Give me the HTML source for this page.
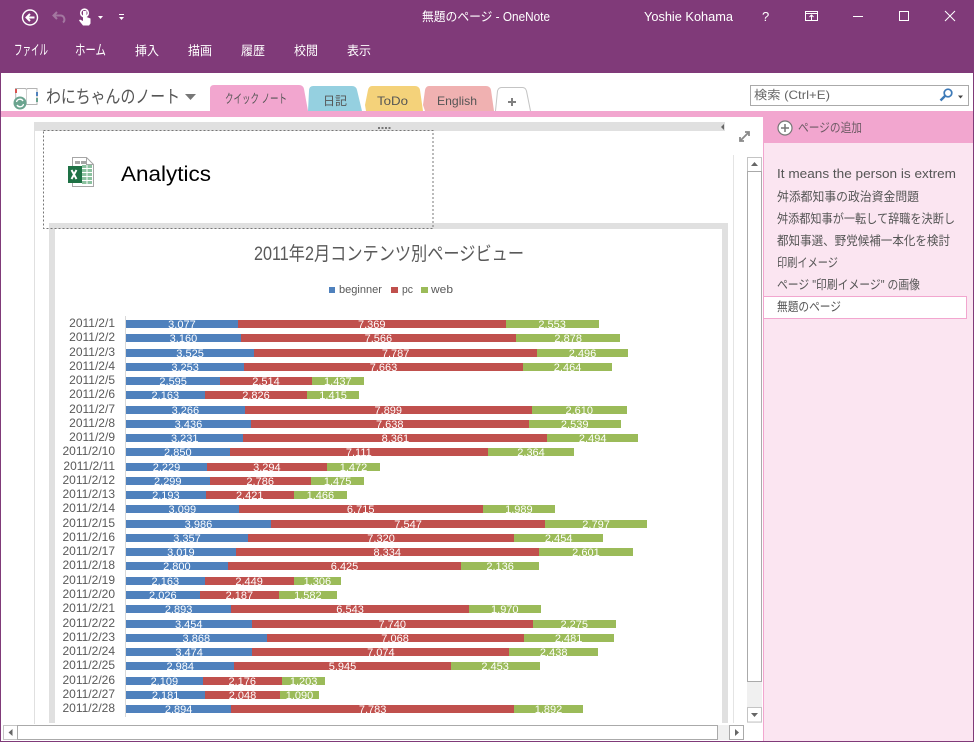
<!DOCTYPE html>
<html lang="ja"><head><meta charset="utf-8"><title>無題のページ - OneNote</title>
<style>
html,body{margin:0;padding:0;background:#fff}
#w{position:relative;width:974px;height:742px;overflow:hidden;background:#fff;font-family:"Liberation Sans","Noto Sans CJK JP",sans-serif}
svg.m{position:absolute;left:0;top:0}
svg text{font-family:"Liberation Sans","Noto Sans CJK JP",sans-serif}
.r{position:absolute;left:0;height:8px;width:700px}
.r b{position:absolute;right:calc(100% - 115px);left:40px;top:-4px;text-align:right;font:400 12px/14px "Liberation Sans",sans-serif;color:#595959}
.r div{position:absolute;left:126px;top:0;display:flex;height:8px}
.r i{display:block;height:8px;width:calc(var(--n)*.03635px);font:400 11px/8px "Liberation Sans",sans-serif;color:#fff;text-align:center;white-space:nowrap}
.r i span{position:relative;top:1px}
.r i:nth-child(1){background:#4f81bd}
.r i:nth-child(2){background:#c0504d}
.r i:nth-child(3){background:#9bbb59}
</style></head><body><div id="w">
<svg class="m" width="974" height="742" viewBox="0 0 974 742">
<!-- frame and title -->
<rect x="0" y="0" width="974" height="73" fill="#803a79"/>
<rect x="0" y="73" width="1" height="669" fill="#803a79"/>
<rect x="973" y="73" width="1" height="669" fill="#803a79"/>
<rect x="0" y="741" width="974" height="1" fill="#803a79"/>
<!-- section band -->
<rect x="1" y="111" width="972" height="6" fill="#f2a6cf"/>
<!-- right panel -->
<rect x="764" y="117" width="209" height="624" fill="#fbe5f1"/>
<rect x="763" y="117" width="1" height="624" fill="#f2a6cf"/>
<rect x="763" y="117" width="210" height="26" fill="#f2a6cf"/>
<!-- QAT -->
<circle cx="30" cy="17.5" r="7.5" fill="none" stroke="#fff" stroke-width="1.4"/>
<path d="M34.5 17.5H27M30 14l-3.5 3.5L30 21" fill="none" stroke="#fff" stroke-width="2"/>
<path d="M54 15.5h7a4 4 0 0 1 2 7M57 12l-3.5 3.5L57 19" fill="none" stroke="#a377a0" stroke-width="2"/>
<path d="M83 11h3.500v6l4 1.500v5l-1.500 2h-6l-4-5 1-1 3 1.500z" fill="#fff"/>
<circle cx="84.500" cy="13" r="3.800" fill="none" stroke="#fff" stroke-width="1.600"/>
<path d="M98 16h5l-2.500 3z" fill="#fff"/>
<path d="M119 14h5v1h-5zM119 17h5l-2.500 3z" fill="#fff"/>
<text x="422" y="21" font-size="12.500" fill="#fff" textLength="128" lengthAdjust="spacingAndGlyphs">無題のページ - OneNote</text>
<text x="644" y="21" font-size="12.500" fill="#fff" textLength="89" lengthAdjust="spacingAndGlyphs">Yoshie Kohama</text>
<text x="762" y="21" font-size="13" fill="#fff">?</text>
<!-- window buttons -->
<path d="M805.500 11.500h12v9h-12zM805.500 13.500h12" fill="none" stroke="#fff"/>
<path d="M811.500 20v-5M809.500 17l2-2 2 2" fill="none" stroke="#fff"/>
<rect x="853" y="16" width="10" height="1" fill="#fff"/>
<rect x="899.500" y="11.500" width="9" height="9" fill="none" stroke="#fff"/>
<path d="M945 11l10 10M955 11l-10 10" stroke="#fff" fill="none"/>
<!-- menu -->
<g font-size="12.500" fill="#fff">
<text x="14" y="55" font-size="14" textLength="34" lengthAdjust="spacingAndGlyphs">ファイル</text>
<text x="75" y="55" font-size="14" textLength="31" lengthAdjust="spacingAndGlyphs">ホーム</text>
<text x="135" y="55" textLength="24" lengthAdjust="spacingAndGlyphs">挿入</text>
<text x="188" y="55" textLength="24" lengthAdjust="spacingAndGlyphs">描画</text>
<text x="241" y="55" textLength="24" lengthAdjust="spacingAndGlyphs">履歴</text>
<text x="294" y="55" textLength="24" lengthAdjust="spacingAndGlyphs">校閲</text>
<text x="347" y="55" textLength="24" lengthAdjust="spacingAndGlyphs">表示</text>
</g>
<!-- notebook icon -->
<path d="M15.500 88.500h10l1 1 1-1h9.500v16h-21z" fill="#fff" stroke="#b4b4b4"/>
<path d="M26.500 89.500v15" stroke="#cfcfcf"/>
<rect x="15" y="89" width="2" height="4" fill="#d9534f"/>
<rect x="36" y="92" width="2" height="4" fill="#4f81bd"/>
<rect x="36" y="98" width="2" height="4" fill="#6ba48f"/>
<circle cx="20" cy="103" r="6.500" fill="#6ba48f"/>
<path d="M16.500 102a3.500 3.500 0 0 1 6.500-1M23.500 104a3.500 3.500 0 0 1-6.500 1" fill="none" stroke="#fff" stroke-width="1.300"/>
<text x="46" y="103" font-size="18" fill="#555" textLength="134" lengthAdjust="spacingAndGlyphs">わにちゃんのノート</text>
<path d="M185 94h11l-5.500 6z" fill="#777"/>
<!-- tabs -->
<path d="M210 111v-22q0-4 4-4h85q4 0 5 4l4 22z" fill="#f2a6cf"/>
<path d="M308 111l1-20q0-5 4-5h39q4 0 5 4l5 21z" fill="#95d0e0"/>
<path d="M366 111l-1-6 3-15q1-4 4-4h43q4 0 5 4l3 21z" fill="#f4d27a"/>
<path d="M425 111l-2-6 2-15q1-4 4-4h57q4 0 5 4l3 21z" fill="#f0b1b1"/>
<path d="M495.500 111l2-20q1-3.500 4-3.500h21q3 0 4 3.500l4 20" fill="#fff" stroke="#c4c4c4"/>
<text x="225" y="103" font-size="12.500" fill="#555" textLength="62" lengthAdjust="spacingAndGlyphs">クイック ノート</text>
<text x="323" y="105" font-size="12" fill="#555">日記</text>
<text x="377" y="105" font-size="12" fill="#555" textLength="31" lengthAdjust="spacingAndGlyphs">ToDo</text>
<text x="437" y="105" font-size="12" fill="#555" textLength="40" lengthAdjust="spacingAndGlyphs">English</text>
<path d="M508 102h8M512 98v8" stroke="#808080" stroke-width="2"/>
<!-- search -->
<rect x="750.500" y="85.500" width="218" height="20" fill="#fff" stroke="#aaa"/>
<text x="754" y="99" font-size="12" fill="#666" textLength="76" lengthAdjust="spacingAndGlyphs">検索 (Ctrl+E)</text>
<circle cx="948" cy="93" r="3.800" fill="none" stroke="#3d7ab8" stroke-width="1.700"/>
<path d="M945 96l-4.500 4.500" stroke="#3d7ab8" stroke-width="2.400"/>
<path d="M958 95.500h5l-2.500 3z" fill="#444"/>
<!-- canvas -->
<rect x="34" y="122" width="691" height="9" fill="#e0e0e0"/>
<rect x="34" y="131" width="1" height="593" fill="#e0e0e0"/>
<path d="M378 127h2v2h-2zM381.500 127h2v2h-2zM385 127h2v2h-2zM388.500 127h2v2h-2z" fill="#777"/>
<path d="M724 124v6l-3-3z" fill="#666"/>
<path d="M740 141l9-9M745 132h4v4M740 137v4h4" fill="none" stroke="#8a8a8a" stroke-width="1.800"/>
<!-- embedded frame -->
<path d="M49 223h679v500h-6V229H55v494h-6z" fill="#e0e0e0"/>
<path d="M43.500 130.500h389.500v98H43.500z" fill="none" stroke="#777" stroke-dasharray="2 2"/>
<rect x="733" y="155" width="1" height="568" fill="#e4e4e4"/>
<!-- excel icon -->
<path d="M72.500 157.500h14l7 7v22h-21z" fill="#fff" stroke="#a6a6a6"/>
<path d="M86.500 157.500v7h7" fill="none" stroke="#a6a6a6"/>
<rect x="75" y="161" width="5" height="3" fill="#a6a6a6"/><rect x="81" y="161" width="5" height="3" fill="#a6a6a6"/>
<path d="M82 165h4.500v3H82zM87.500 165H92v3h-4.500zM82 169h4.500v3H82zM87.500 169H92v3h-4.500zM82 173h4.500v3H82zM87.500 173H92v3h-4.500zM82 177h4.500v3H82zM87.500 177H92v3h-4.500zM82 181h4.500v3H82zM87.500 181H92v3h-4.500z" fill="#8cc2a0"/>
<rect x="68" y="166" width="14" height="17" fill="#1e7145"/>
<path d="M71.500 170l5 9M76.500 170l-5 9" stroke="#fff" stroke-width="1.900"/>
<text x="121" y="181" font-size="21.500" fill="#000" textLength="90" lengthAdjust="spacingAndGlyphs">Analytics</text>
<!-- chart head -->
<text x="254" y="260" font-size="19" fill="#595959" textLength="270" lengthAdjust="spacingAndGlyphs">2011年2月コンテンツ別ページビュー</text>
<rect x="329" y="287" width="6" height="6" fill="#4f81bd"/>
<text x="339" y="293" font-size="11" fill="#595959" textLength="43" lengthAdjust="spacingAndGlyphs">beginner</text>
<rect x="391" y="287" width="7" height="6" fill="#c0504d"/>
<text x="402" y="293" font-size="11" fill="#595959" textLength="11" lengthAdjust="spacingAndGlyphs">pc</text>
<rect x="421" y="287" width="7" height="6" fill="#9bbb59"/>
<text x="431" y="293" font-size="11" fill="#595959" textLength="22" lengthAdjust="spacingAndGlyphs">web</text>
<rect x="125" y="316" width="1" height="401" fill="#d9d9d9"/>
<!-- vertical scrollbar -->
<rect x="747" y="157" width="15" height="566" fill="#f0f0f0"/>
<rect x="747.500" y="157.500" width="14" height="14" fill="#fff" stroke="#c4c4c4"/>
<path d="M751 166h7l-3.500-4z" fill="#666"/>
<rect x="747.500" y="171.500" width="14" height="510" fill="#fff" stroke="#aaa"/>
<rect x="747.500" y="707.500" width="14" height="14.500" fill="#fff" stroke="#c4c4c4"/>
<path d="M751 713h7l-3.500 4z" fill="#666"/>
<!-- horizontal scrollbar -->
<rect x="3" y="725" width="741" height="15" fill="#f0f0f0"/>
<rect x="3.500" y="725.500" width="14" height="14" fill="#fff" stroke="#c4c4c4"/>
<path d="M12.500 729v7l-4-3.500z" fill="#666"/>
<rect x="17.500" y="725.500" width="700" height="14" fill="#fff" stroke="#aaa"/>
<rect x="729.500" y="725.500" width="14" height="14" fill="#fff" stroke="#aaa"/>
<path d="M735 729v7l4-3.500z" fill="#666"/>
<!-- page panel -->
<circle cx="785" cy="128" r="7" fill="#fff" stroke="#777" stroke-width="1.200"/>
<path d="M781 128h8M785 124v8" stroke="#777" stroke-width="1.500"/>
<text x="798" y="132" font-size="12.500" fill="#6d5a64" textLength="64" lengthAdjust="spacingAndGlyphs">ページの追加</text>
<rect x="763.500" y="296.500" width="203" height="22" fill="#fff" stroke="#f2a6cf"/>
<g font-size="12.500" fill="#555">
<text x="777" y="178" textLength="179" lengthAdjust="spacingAndGlyphs">It means the person is extrem</text>
<text x="777" y="201" textLength="142" lengthAdjust="spacingAndGlyphs">舛添都知事の政治資金問題</text>
<text x="777" y="223" textLength="178" lengthAdjust="spacingAndGlyphs">舛添都知事が一転して辞職を決断し</text>
<text x="777" y="245" textLength="173" lengthAdjust="spacingAndGlyphs">都知事選、野党候補一本化を検討</text>
<text x="777" y="267" textLength="61" lengthAdjust="spacingAndGlyphs">印刷イメージ</text>
<text x="777" y="289" textLength="143" lengthAdjust="spacingAndGlyphs">ページ "印刷イメージ" の画像</text>
<text x="777" y="311" textLength="64" lengthAdjust="spacingAndGlyphs">無題のページ</text>
</g>
</svg>
<div class="r" style="top:320px"><b>2011/2/1</b><div><i style="--n:3077"><span>3,077</span></i><i style="--n:7369"><span>7,369</span></i><i style="--n:2553"><span>2,553</span></i></div></div>
<div class="r" style="top:334.3px"><b>2011/2/2</b><div><i style="--n:3160"><span>3,160</span></i><i style="--n:7566"><span>7,566</span></i><i style="--n:2878"><span>2,878</span></i></div></div>
<div class="r" style="top:348.5px"><b>2011/2/3</b><div><i style="--n:3525"><span>3,525</span></i><i style="--n:7787"><span>7,787</span></i><i style="--n:2496"><span>2,496</span></i></div></div>
<div class="r" style="top:362.8px"><b>2011/2/4</b><div><i style="--n:3253"><span>3,253</span></i><i style="--n:7663"><span>7,663</span></i><i style="--n:2464"><span>2,464</span></i></div></div>
<div class="r" style="top:377px"><b>2011/2/5</b><div><i style="--n:2595"><span>2,595</span></i><i style="--n:2514"><span>2,514</span></i><i style="--n:1437"><span>1,437</span></i></div></div>
<div class="r" style="top:391.3px"><b>2011/2/6</b><div><i style="--n:2163"><span>2,163</span></i><i style="--n:2826"><span>2,826</span></i><i style="--n:1415"><span>1,415</span></i></div></div>
<div class="r" style="top:405.6px"><b>2011/2/7</b><div><i style="--n:3266"><span>3,266</span></i><i style="--n:7899"><span>7,899</span></i><i style="--n:2610"><span>2,610</span></i></div></div>
<div class="r" style="top:419.8px"><b>2011/2/8</b><div><i style="--n:3436"><span>3,436</span></i><i style="--n:7638"><span>7,638</span></i><i style="--n:2539"><span>2,539</span></i></div></div>
<div class="r" style="top:434.1px"><b>2011/2/9</b><div><i style="--n:3231"><span>3,231</span></i><i style="--n:8361"><span>8,361</span></i><i style="--n:2494"><span>2,494</span></i></div></div>
<div class="r" style="top:448.3px"><b>2011/2/10</b><div><i style="--n:2850"><span>2,850</span></i><i style="--n:7111"><span>7,111</span></i><i style="--n:2364"><span>2,364</span></i></div></div>
<div class="r" style="top:462.6px"><b>2011/2/11</b><div><i style="--n:2229"><span>2,229</span></i><i style="--n:3294"><span>3,294</span></i><i style="--n:1472"><span>1,472</span></i></div></div>
<div class="r" style="top:476.9px"><b>2011/2/12</b><div><i style="--n:2299"><span>2,299</span></i><i style="--n:2786"><span>2,786</span></i><i style="--n:1475"><span>1,475</span></i></div></div>
<div class="r" style="top:491.1px"><b>2011/2/13</b><div><i style="--n:2193"><span>2,193</span></i><i style="--n:2421"><span>2,421</span></i><i style="--n:1466"><span>1,466</span></i></div></div>
<div class="r" style="top:505.4px"><b>2011/2/14</b><div><i style="--n:3099"><span>3,099</span></i><i style="--n:6715"><span>6,715</span></i><i style="--n:1989"><span>1,989</span></i></div></div>
<div class="r" style="top:519.6px"><b>2011/2/15</b><div><i style="--n:3986"><span>3,986</span></i><i style="--n:7547"><span>7,547</span></i><i style="--n:2797"><span>2,797</span></i></div></div>
<div class="r" style="top:533.9px"><b>2011/2/16</b><div><i style="--n:3357"><span>3,357</span></i><i style="--n:7320"><span>7,320</span></i><i style="--n:2454"><span>2,454</span></i></div></div>
<div class="r" style="top:548.2px"><b>2011/2/17</b><div><i style="--n:3019"><span>3,019</span></i><i style="--n:8334"><span>8,334</span></i><i style="--n:2601"><span>2,601</span></i></div></div>
<div class="r" style="top:562.4px"><b>2011/2/18</b><div><i style="--n:2800"><span>2,800</span></i><i style="--n:6425"><span>6,425</span></i><i style="--n:2136"><span>2,136</span></i></div></div>
<div class="r" style="top:576.7px"><b>2011/2/19</b><div><i style="--n:2163"><span>2,163</span></i><i style="--n:2449"><span>2,449</span></i><i style="--n:1306"><span>1,306</span></i></div></div>
<div class="r" style="top:590.9px"><b>2011/2/20</b><div><i style="--n:2026"><span>2,026</span></i><i style="--n:2187"><span>2,187</span></i><i style="--n:1582"><span>1,582</span></i></div></div>
<div class="r" style="top:605.2px"><b>2011/2/21</b><div><i style="--n:2893"><span>2,893</span></i><i style="--n:6543"><span>6,543</span></i><i style="--n:1970"><span>1,970</span></i></div></div>
<div class="r" style="top:619.5px"><b>2011/2/22</b><div><i style="--n:3454"><span>3,454</span></i><i style="--n:7740"><span>7,740</span></i><i style="--n:2275"><span>2,275</span></i></div></div>
<div class="r" style="top:633.7px"><b>2011/2/23</b><div><i style="--n:3868"><span>3,868</span></i><i style="--n:7068"><span>7,068</span></i><i style="--n:2481"><span>2,481</span></i></div></div>
<div class="r" style="top:648px"><b>2011/2/24</b><div><i style="--n:3474"><span>3,474</span></i><i style="--n:7074"><span>7,074</span></i><i style="--n:2438"><span>2,438</span></i></div></div>
<div class="r" style="top:662.2px"><b>2011/2/25</b><div><i style="--n:2984"><span>2,984</span></i><i style="--n:5945"><span>5,945</span></i><i style="--n:2453"><span>2,453</span></i></div></div>
<div class="r" style="top:676.5px"><b>2011/2/26</b><div><i style="--n:2109"><span>2,109</span></i><i style="--n:2176"><span>2,176</span></i><i style="--n:1203"><span>1,203</span></i></div></div>
<div class="r" style="top:690.8px"><b>2011/2/27</b><div><i style="--n:2181"><span>2,181</span></i><i style="--n:2048"><span>2,048</span></i><i style="--n:1090"><span>1,090</span></i></div></div>
<div class="r" style="top:705px"><b>2011/2/28</b><div><i style="--n:2894"><span>2,894</span></i><i style="--n:7783"><span>7,783</span></i><i style="--n:1892"><span>1,892</span></i></div></div>
</div></body></html>
